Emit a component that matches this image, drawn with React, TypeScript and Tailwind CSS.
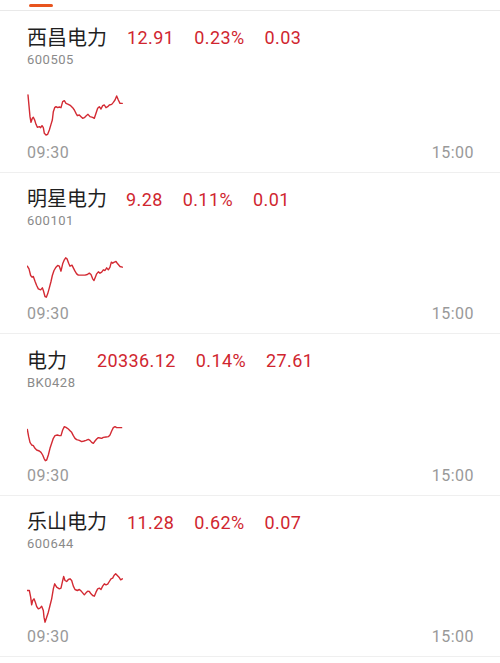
import React from 'react';

type Quote = {
  name: string;
  code: string;
  price: string;
  pct: string;
  chg: string;
  nameGap: string;
  shift: number;
  points: number[][];
};

const quotes: Quote[] = [
  {
    name: '西昌电力',
    code: '600505',
    price: '12.91',
    pct: '0.23%',
    chg: '0.03',
    nameGap: 'mr-[20px]',
    shift: 30,
    points: [
      [24, 30], [30, 95], [33, 112], [37, 100], [40, 97], [44, 105], [48, 118], [52, 127], [58, 125], [62, 128],
      [66, 122], [70, 128], [73, 145], [78, 150], [83, 148], [88, 135], [93, 118], [97, 105], [100, 80], [104, 68],
      [108, 65], [113, 68], [118, 66], [123, 68], [128, 50], [133, 47], [138, 55], [145, 58], [152, 62], [158, 68],
      [163, 75], [168, 85], [172, 92], [178, 90], [183, 95], [188, 100], [193, 98], [198, 93], [204, 88], [210, 95],
      [218, 97], [223, 100], [228, 85], [233, 70], [238, 65], [243, 72], [248, 62], [253, 60], [258, 68], [263, 65],
      [268, 60], [275, 58], [280, 52], [285, 45], [290, 33], [295, 45], [300, 55], [307, 55],
    ],
  },
  {
    name: '明星电力',
    code: '600101',
    price: '9.28',
    pct: '0.11%',
    chg: '0.01',
    nameGap: 'mr-[19px]',
    shift: 40.5,
    points: [
      [22, 47], [27, 55], [32, 75], [36, 80], [40, 78], [45, 92], [50, 105], [55, 115], [62, 118], [67, 112],
      [70, 120], [75, 138], [79, 140], [83, 130], [88, 112], [93, 93], [97, 75], [102, 60], [108, 50], [113, 45],
      [118, 47], [123, 62], [128, 40], [133, 28], [137, 22], [141, 25], [146, 38], [150, 47], [156, 44], [160, 52],
      [165, 62], [170, 70], [175, 74], [185, 74], [195, 74], [202, 72], [208, 68], [213, 72], [218, 85], [222, 90],
      [226, 80], [230, 70], [235, 64], [240, 68], [245, 65], [250, 58], [255, 60], [260, 52], [265, 58], [270, 50],
      [274, 35], [278, 38], [283, 35], [288, 33], [293, 40], [300, 48], [307, 50],
    ],
  },
  {
    name: '电力',
    code: 'BK0428',
    price: '20336.12',
    pct: '0.14%',
    chg: '27.61',
    nameGap: 'mr-[30px]',
    shift: 51,
    points: [
      [22, 43], [26, 65], [30, 82], [35, 90], [40, 92], [45, 100], [50, 105], [58, 108], [63, 112], [68, 120],
      [72, 130], [76, 137], [80, 135], [85, 120], [90, 100], [95, 85], [100, 70], [105, 62], [112, 60], [118, 62],
      [123, 62], [128, 45], [133, 35], [138, 37], [145, 42], [150, 47], [155, 52], [160, 62], [165, 70], [170, 74],
      [178, 76], [185, 80], [192, 78], [198, 76], [205, 73], [210, 76], [215, 82], [220, 85], [225, 78], [230, 72],
      [235, 68], [240, 69], [245, 70], [250, 67], [258, 66], [265, 65], [270, 60], [275, 48], [280, 38], [285, 35],
      [290, 38], [297, 38], [305, 38],
    ],
  },
  {
    name: '乐山电力',
    code: '600644',
    price: '11.28',
    pct: '0.62%',
    chg: '0.07',
    nameGap: 'mr-[20px]',
    shift: 16.5,
    points: [
      [22, 75], [28, 75], [32, 95], [35, 118], [38, 105], [42, 100], [46, 110], [50, 123], [55, 130], [60, 128],
      [65, 122], [70, 135], [72, 155], [75, 170], [80, 155], [85, 140], [90, 120], [95, 100], [100, 70], [104, 55],
      [110, 65], [118, 70], [123, 68], [127, 50], [131, 33], [135, 45], [140, 48], [145, 42], [150, 40], [155, 45],
      [160, 62], [165, 72], [172, 75], [178, 72], [183, 76], [188, 82], [193, 88], [198, 82], [203, 77], [208, 78],
      [213, 85], [218, 90], [223, 92], [228, 80], [233, 70], [238, 68], [243, 72], [248, 62], [253, 55], [258, 58],
      [263, 56], [268, 48], [273, 40], [278, 38], [282, 30], [287, 25], [292, 30], [297, 35], [302, 43], [307, 40],
    ],
  },
];

function Sparkline({ points, shift }: { points: number[][]; shift: number }) {
  return (
    <svg width="110" height="66" viewBox="21 0 330 198" className="block">
      <polyline
        points={points.map(([x, y]) => `${x},${y + shift}`).join(' ')}
        fill="none"
        stroke="#d32a33"
        strokeWidth="4.2"
        strokeLinejoin="round"
        strokeLinecap="round"
      />
    </svg>
  );
}

function QuoteRow({ q }: { q: Quote }) {
  return (
    <div className="h-[161.5px] border-b border-[#efefef] pl-[27px] pr-[26px] pt-[13.5px] flex flex-col">
      {/* Header */}
      <div className="flex items-center h-[26px]">
        <span className={`text-[20px] leading-[26px] text-[#1f1f1f] ${q.nameGap}`}>{q.name}</span>
        <div className="flex items-center gap-[20px] text-[18px] tracking-[0.4px] text-[#d0262f]">
          <span>{q.price}</span>
          <span>{q.pct}</span>
          <span>{q.chg}</span>
        </div>
      </div>
      <div className="text-[13px] leading-[17px] tracking-[0.5px] text-[#8a8a8a]">{q.code}</div>

      {/* Chart */}
      <div className="mt-[7.5px]">
        <Sparkline points={q.points} shift={q.shift} />
      </div>

      {/* Time axis */}
      <div className="mt-[1.7px] flex justify-between text-[16px] leading-[20px] tracking-[0.5px] text-[#999999]">
        <span>09:30</span>
        <span>15:00</span>
      </div>
    </div>
  );
}

export default function App() {
  return (
    <div className="w-[500px] h-[663px] bg-white overflow-hidden font-['Roboto','Noto_Sans_CJK_SC',sans-serif]">
      <div className="h-[10px] pt-[4px] pl-[29px]">
        <div className="w-[24px] h-[2.7px] rounded-full bg-[#e8541e]" />
      </div>
      <div className="h-px bg-[#e9e9e9]" />
      {quotes.map((q) => (
        <QuoteRow key={q.code} q={q} />
      ))}
    </div>
  );
}
